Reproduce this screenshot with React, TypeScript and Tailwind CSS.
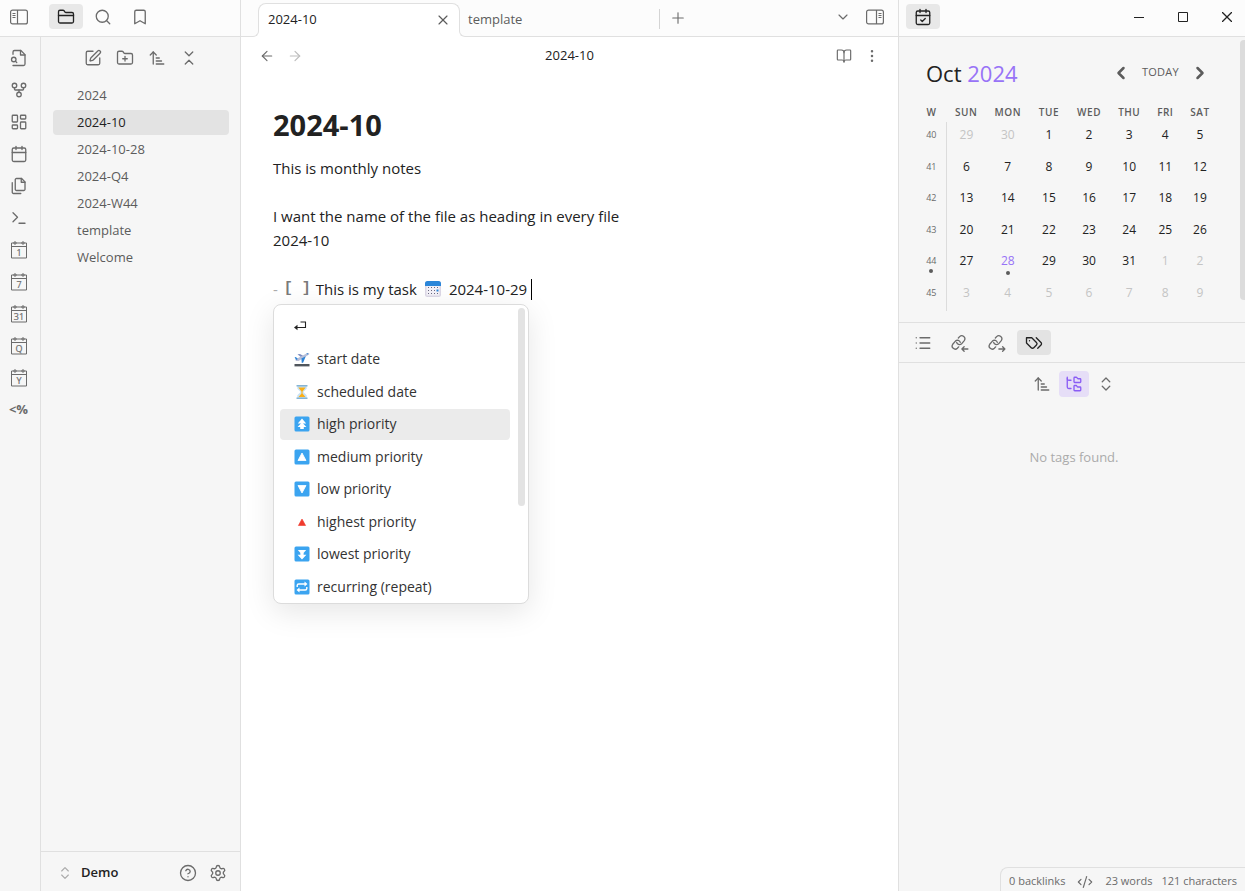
import type { ReactNode } from 'react';
import {
  ArrowLeft,
  ArrowRight,
  ArrowUpNarrowWide,
  Bookmark,
  BookOpen,
  Calendar,
  CalendarCheck,
  ChevronDown,
  ChevronLeft,
  ChevronRight,
  ChevronsDownUp,
  ChevronsUpDown,
  CircleHelp,
  CodeXml,
  EllipsisVertical,
  FolderClosed,
  FolderPlus,
  FolderTree,
  GitFork,
  LayoutDashboard,
  List,
  Plus,
  Search,
  Settings,
  SquarePen,
  Terminal,
  X,
} from 'lucide-react';

function LineIcon({ size = 18, children }: { size?: number; children: ReactNode }) {
  return (
    <svg
      width={size}
      height={size}
      viewBox="0 0 24 24"
      fill="none"
      stroke="currentColor"
      strokeWidth="1.75"
      strokeLinecap="round"
      strokeLinejoin="round"
      aria-hidden="true"
    >
      {children}
    </svg>
  );
}

function SidebarIcon({ side }: { side: 'left' | 'right' }) {
  const divider = side === 'left' ? 7.5 : 10.5;
  const lines = side === 'left' ? 2.5 : 12.5;
  return (
    <svg width="18" height="16" viewBox="0 0 18 16" fill="none" stroke="currentColor" aria-hidden="true">
      <rect x="0.6" y="1.1" width="16.8" height="13.8" rx="2" strokeWidth="1.2" />
      <path d={`M${divider} 1v14`} strokeWidth="1.2" />
      <path d={`M${lines} 4.5h3M${lines} 6.5h3M${lines} 8.5h3`} strokeWidth="1" />
    </svg>
  );
}

function FileSearchIcon() {
  return (
    <LineIcon>
      <path d="M4 22h14a2 2 0 0 0 2-2V7.5L14.5 2H6a2 2 0 0 0-2 2v3" />
      <path d="M14 2v6h6" />
      <path d="M5 17a3 3 0 1 0 0-6 3 3 0 0 0 0 6z" />
      <path d="m9 18-1.5-1.5" />
    </LineIcon>
  );
}

function FilesIcon() {
  return (
    <LineIcon>
      <path d="M15.5 2H8.6c-.4 0-.8.2-1.1.5-.3.3-.5.7-.5 1.1v12.8c0 .4.2.8.5 1.1.3.3.7.5 1.1.5h9.8c.4 0 .8-.2 1.1-.5.3-.3.5-.7.5-1.1V6.5L15.5 2z" />
      <path d="M3 7.6v12.8c0 .4.2.8.5 1.1.3.3.7.5 1.1.5h9.8" />
      <path d="M15 2v5h5" />
    </LineIcon>
  );
}

function TagsIcon() {
  return (
    <LineIcon>
      <path d="M9 5H2v7l6.29 6.29c.94.94 2.48.94 3.42 0l3.58-3.58c.94-.94.94-2.48 0-3.42L9 5Z" />
      <path d="M6 9.01V9" />
      <path d="m15 5 6.3 6.3a2.4 2.4 0 0 1 0 3.4L17 19" />
    </LineIcon>
  );
}

function LinksIcon({ outgoing }: { outgoing?: boolean }) {
  return (
    <LineIcon>
      <path d="M7.600 11.300a4 4 0 0 0 6.200 2.100l3.900-4.600a4.100 4.100 0 0 0-6.200-5.300L9.800 5.400" />
      <path d="M12.400 9.700a4 4 0 0 0-6.200-2.100l-3.900 4.600a4.100 4.100 0 0 0 6.200 5.300l1.700-1.900" transform="translate(0 1.500)" />
      {outgoing ? <path d="M14.500 20h8M19.500 17l3 3-3 3" /> : <path d="M14.500 20h8M17.500 17l-3 3 3 3" />}
    </LineIcon>
  );
}

function DatedCalendarIcon({ label }: { label: string }) {
  return (
    <svg width="18" height="20" viewBox="0 0 18 20" fill="none" stroke="currentColor" aria-hidden="true">
      <path d="M1.5 3h15v15h-15zM1.5 6.5h15" strokeWidth="1" />
      <circle cx="5" cy="3" r="1.2" strokeWidth="1" />
      <circle cx="13" cy="3" r="1.2" strokeWidth="1" />
      <text
        x="9"
        y="15.5"
        textAnchor="middle"
        fontSize="9"
        fill="currentColor"
        strokeWidth="0.2"
        fontFamily="Open Sans, sans-serif"
      >
        {label}
      </text>
    </svg>
  );
}

function IconButton({
  label,
  className,
  children,
}: {
  label: string;
  className: string;
  children: ReactNode;
}) {
  return (
    <button
      type="button"
      aria-label={label}
      className={`flex shrink-0 items-center justify-center rounded ${className}`}
    >
      {children}
    </button>
  );
}

const stroke = { size: 18, strokeWidth: 1.75 };

const ribbon: { label: string; icon: ReactNode }[] = [
  { label: 'Open quick switcher', icon: <FileSearchIcon /> },
  { label: 'Open graph view', icon: <GitFork {...stroke} /> },
  { label: 'Create new canvas', icon: <LayoutDashboard {...stroke} /> },
  { label: "Open today's daily note", icon: <Calendar {...stroke} /> },
  { label: 'Insert template', icon: <FilesIcon /> },
  { label: 'Open command palette', icon: <Terminal {...stroke} /> },
  { label: 'Open daily note', icon: <DatedCalendarIcon label="1" /> },
  { label: 'Open weekly note', icon: <DatedCalendarIcon label="7" /> },
  { label: 'Open monthly note', icon: <DatedCalendarIcon label="31" /> },
  { label: 'Open quarterly note', icon: <DatedCalendarIcon label="Q" /> },
  { label: 'Open yearly note', icon: <DatedCalendarIcon label="Y" /> },
  { label: 'Templater', icon: <span className="text-[13px] font-bold">&lt;%</span> },
];

const files = ['2024', '2024-10', '2024-10-28', '2024-Q4', '2024-W44', 'template', 'Welcome'];

function LeftPanel() {
  return (
    <aside className="flex w-[241px] shrink-0 flex-col border-r border-[#e0e0e0] bg-[#f6f6f6] text-[#5c5c5c]">
      <div className="flex h-[37px] shrink-0 items-center border-b border-[#e0e0e0] bg-[#fcfcfc] pb-[3px] text-[#6b6b6b]">
        <IconButton label="Collapse left sidebar" className="ml-0.5 mr-[13px] h-[25px] w-[34px]">
          <SidebarIcon side="left" />
        </IconButton>
        <div className="flex gap-[3px]">
          <IconButton label="Files" className="h-[25px] w-[34px] bg-[#e8e8e8] text-[#222222]">
            <FolderClosed {...stroke} />
          </IconButton>
          <IconButton label="Search" className="h-[25px] w-[34px]">
            <Search {...stroke} />
          </IconButton>
          <IconButton label="Bookmarks" className="h-[25px] w-[34px]">
            <Bookmark {...stroke} />
          </IconButton>
        </div>
      </div>
      <div className="flex min-h-0 flex-1">
        <nav
          aria-label="Ribbon"
          className="flex w-[41px] shrink-0 flex-col items-center gap-1 border-r border-[#e0e0e0] pt-[7px] pr-[3px] text-[#6b6b6b]"
        >
          {ribbon.map((r) => (
            <IconButton key={r.label} label={r.label} className="h-7 w-7">
              {r.icon}
            </IconButton>
          ))}
        </nav>
        <div className="flex min-w-0 flex-1 flex-col">
          <div className="flex justify-center gap-1 pt-[7px] text-[#6b6b6b]">
            <IconButton label="New note" className="size-7">
              <SquarePen {...stroke} />
            </IconButton>
            <IconButton label="New folder" className="size-7">
              <FolderPlus {...stroke} />
            </IconButton>
            <IconButton label="Change sort order" className="size-7">
              <ArrowUpNarrowWide {...stroke} />
            </IconButton>
            <IconButton label="Collapse all" className="size-7">
              <ChevronsDownUp {...stroke} />
            </IconButton>
          </div>
          <ul className="flex flex-1 flex-col gap-0.5 pt-[11px] pr-[11px] pl-3">
            {files.map((f) => (
              <li key={f}>
                <button
                  type="button"
                  className={`block h-[25px] w-full rounded pl-6 text-left text-[13px] leading-[25px] ${
                    f === '2024-10' ? 'bg-[#e3e3e3] text-[#222222]' : 'text-[#5c5c5c]'
                  }`}
                >
                  {f}
                </button>
              </li>
            ))}
          </ul>
          <div className="flex h-10 items-center border-t border-[#e0e0e0] pt-[3px] pr-2 pl-4">
            <button type="button" className="flex flex-1 items-center gap-2 text-[13px] font-semibold text-[#222222]">
              <ChevronsUpDown size={16} strokeWidth={1.75} className="text-[#ababab]" />
              Demo
            </button>
            <div className="flex gap-0.5 text-[#6b6b6b]">
              <IconButton label="Help" className="size-7">
                <CircleHelp {...stroke} />
              </IconButton>
              <IconButton label="Settings" className="size-7">
                <Settings {...stroke} />
              </IconButton>
            </div>
          </div>
        </div>
      </div>
    </aside>
  );
}

function TabBar() {
  return (
    <div className="flex h-[37px] shrink-0 border-b border-[#e0e0e0] bg-[#fcfcfc] text-[13px] text-[#5c5c5c]">
      <div className="relative mt-[3px] -mb-px ml-[17px] flex w-[202px] shrink-0 items-center rounded-t-lg border border-b-0 border-[#e0e0e0] bg-white pr-2 pb-0.5 pl-[9px] text-[#222222]">
        <button type="button" className="flex-1 text-left">
          2024-10
        </button>
        <IconButton label="Close tab" className="size-4 text-[#5c5c5c]">
          <X size={16} strokeWidth={1.75} />
        </IconButton>
        <span className="absolute bottom-0 -left-[7px] size-[7px] overflow-hidden bg-white">
          <span className="block size-full rounded-br-[6px] border-r border-b border-[#e0e0e0] bg-[#fcfcfc]" />
        </span>
        <span className="absolute -right-[7px] bottom-0 size-[7px] overflow-hidden bg-white">
          <span className="block size-full rounded-bl-[6px] border-b border-l border-[#e0e0e0] bg-[#fcfcfc]" />
        </span>
      </div>
      <button type="button" className="w-[192px] pt-[3px] pl-2 text-left">
        template
      </button>
      <span className="mt-[9px] ml-[7px] h-5 w-px bg-[#d4d4d4]" />
      <IconButton label="New tab" className="mt-1 ml-1 size-7 text-[#6b6b6b]">
        <Plus size={18} strokeWidth={1.5} />
      </IconButton>
      <div className="ml-auto flex items-center gap-1 pr-[9px] pb-0.5 text-[#6b6b6b]">
        <IconButton label="Tab list" className="size-7">
          <ChevronDown size={16} strokeWidth={1.75} />
        </IconButton>
        <IconButton label="Collapse right sidebar" className="size-7">
          <SidebarIcon side="right" />
        </IconButton>
      </div>
    </div>
  );
}

function BlueKey({ children }: { children: ReactNode }) {
  return (
    <svg width="16" height="16" viewBox="0 0 16 16" fill="none" aria-hidden="true">
      <rect x="0.5" y="0.5" width="15" height="15" rx="1.5" fill="#3ba4f0" />
      {children}
    </svg>
  );
}

const suggestions: { text: string; icon: ReactNode }[] = [
  {
    text: 'start date',
    icon: (
      <svg width="16" height="16" viewBox="0 0 16 16" aria-hidden="true">
        <rect x="0.5" y="13" width="15" height="2.4" fill="#50565c" />
        <path d="M3.5 3.2 6 3l4 2.2-2.6 1.3z" fill="#7d8fc4" />
        <path d="M1.2 8.6 13 2.2c1-.5 2-.3 2.2.2.2.6-.2 1.2-1 1.7L4.6 9.9 2 10z" fill="#b9bfd8" />
        <path d="m7.4 7.4 4.4-2.2-2.6 6.2-1.4.5z" fill="#2b83d6" />
        <path d="M.6 6.4l1.3-.3 2 1.9-1.6 1z" fill="#2b83d6" />
        <path d="m12.4 2.6 1.4-.4.6.8-1.3.5z" fill="#2b83d6" />
      </svg>
    ),
  },
  {
    text: 'scheduled date',
    icon: (
      <svg width="16" height="16" viewBox="0 0 16 16" aria-hidden="true">
        <path d="M3.3 2h9.4v2.8L9.4 8l3.3 3.2V14H3.3v-2.8L6.6 8 3.3 4.8z" fill="#c9e3f5" />
        <path d="M4.3 3.5h7.4L8.5 7.6v1.9l3 3.5h-7l3-3.5V7.6z" fill="#fbaf17" />
        <path d="M2.5 1h11v1.500h-11zM2.5 13.5h11V15h-11z" fill="#86b4d3" />
      </svg>
    ),
  },
  {
    text: 'high priority',
    icon: (
      <BlueKey>
        <path d="M8 2.6 12.2 7.400H3.800z" fill="#fff" />
        <path d="M8 6.200 12.400 11H9.800v2H6.200v-2H3.600z" fill="#fff" />
      </BlueKey>
    ),
  },
  {
    text: 'medium priority',
    icon: (
      <BlueKey>
        <path d="m8 4 4 7.500H4z" fill="#fff" stroke="#fff" strokeLinejoin="round" strokeWidth="0.800" />
      </BlueKey>
    ),
  },
  {
    text: 'low priority',
    icon: (
      <BlueKey>
        <path d="m8 12 4-7.500H4z" fill="#fff" stroke="#fff" strokeLinejoin="round" strokeWidth="0.800" />
      </BlueKey>
    ),
  },
  {
    text: 'highest priority',
    icon: (
      <svg width="16" height="16" viewBox="0 0 16 16" aria-hidden="true">
        <path d="m8 5 3.600 6.500H4.400z" fill="#f03a2e" stroke="#f03a2e" strokeLinejoin="round" strokeWidth="0.600" />
      </svg>
    ),
  },
  {
    text: 'lowest priority',
    icon: (
      <BlueKey>
        <path d="M8 8.800 12.200 4H3.800z" fill="#fff" />
        <path d="M8 13.400 12.400 8.800H9.600V7H6.400v1.800H3.600z" fill="#fff" />
      </BlueKey>
    ),
  },
  {
    text: 'recurring (repeat)',
    icon: (
      <BlueKey>
        <path
          d="M3.200 8V6.500c0-1 .6-1.500 1.500-1.500h6.500M12.800 8v1.500c0 1-.6 1.500-1.500 1.500H4.800"
          stroke="#fff"
          strokeWidth="1.400"
        />
        <path d="m10.500 2.600 3 2.400-3 2.400zM5.500 8.600l-3 2.400 3 2.400z" fill="#fff" />
      </BlueKey>
    ),
  },
];

function SuggestionPopup() {
  return (
    <div className="absolute top-[27px] left-0 flex w-64 overflow-hidden rounded-lg border border-[#dcdcdc] bg-white shadow-[0_8px_30px_rgba(0,0,0,0.1)]">
      <ul
        role="listbox"
        aria-label="Task suggestions"
        className="flex h-[298px] flex-1 flex-col justify-between pt-1 pb-px pl-1.5"
      >
        <li role="option" aria-selected="false" className="flex h-[33px] shrink-0 items-center pl-[13px]">
          <svg width="14" height="12" viewBox="0 0 14 12" fill="none" stroke="#222222" aria-label="New line">
            <path d="M7.5 2h5v5.500H2" strokeWidth="1.1" />
            <path d="M4.5 4.800v5.400L1 7.500z" fill="#222222" stroke="none" />
          </svg>
        </li>
        {suggestions.map((s) => (
          <li
            key={s.text}
            role="option"
            aria-selected={s.text === 'high priority'}
            className={`flex h-[31px] shrink-0 items-center gap-[7px] rounded pl-[14px] text-[14px] text-[#333333] ${
              s.text === 'high priority' ? 'bg-[#ebebeb]' : ''
            }`}
          >
            {s.icon}
            {s.text}
          </li>
        ))}
      </ul>
      <div className="w-[18px] pt-[3px] pr-[3px] pl-2">
        <div className="h-[198px] rounded-full bg-[#e3e3e3]" />
      </div>
    </div>
  );
}

function DateEmoji() {
  return (
    <svg width="18" height="18" viewBox="0 0 18 18" className="mx-[7px] shrink-0" aria-hidden="true">
      <rect x="1" y="1" width="16" height="16" rx="2.500" fill="#dcd8e6" />
      <path d="M1 6V3.500A2.500 2.500 0 0 1 3.500 1h11A2.500 2.500 0 0 1 17 3.500V6z" fill="#2b86d9" />
      <rect x="2.500" y="6" width="13" height="9.500" fill="#f3f1f8" />
      <g fill="#6d6a80">
        {[7, 10, 13].map((y) =>
          [4, 7, 10, 13].map((x) => <rect key={`${x}-${y}`} x={x} y={y} width="1" height="1" />),
        )}
      </g>
      <rect x="12.500" y="9.500" width="2" height="2" fill="#2b86d9" />
    </svg>
  );
}

function Editor() {
  return (
    <main className="flex min-w-0 flex-1 flex-col bg-white">
      <TabBar />
      <div className="flex h-[38px] shrink-0 items-center justify-between px-3 text-[#6b6b6b]">
        <div className="flex w-16">
          <IconButton label="Navigate back" className="size-7">
            <ArrowLeft size={16} strokeWidth={1.75} />
          </IconButton>
          <IconButton label="Navigate forward" className="size-7 text-[#bdbdbd]">
            <ArrowRight size={16} strokeWidth={1.75} />
          </IconButton>
        </div>
        <span className="text-[13px] text-[#222222]">2024-10</span>
        <div className="flex w-16 justify-end">
          <IconButton label="Reading view" className="size-7">
            <BookOpen size={16} strokeWidth={1.75} />
          </IconButton>
          <IconButton label="More options" className="size-7">
            <EllipsisVertical size={16} strokeWidth={1.75} />
          </IconButton>
        </div>
      </div>
      <article className="px-8 pt-8 text-[15px] leading-6 text-[#222222]">
        <h1 className="mb-[13px] text-[29px] leading-9 font-bold">2024-10</h1>
        <p>This is monthly notes</p>
        <p className="mt-6">I want the name of the file as heading in every file</p>
        <p>2024-10</p>
        <div className="relative mt-[25px] flex items-center whitespace-pre">
          <span className="mr-0.5 text-[#ababab]">- </span>
          <span className="mr-[5px] font-['Liberation_Mono',monospace] font-bold text-[#7a7a7a]">[ ]</span>
          <span>This is my task</span>
          <DateEmoji />
          <span>2024-10-29</span>
          <span className="ml-1 h-[21px] w-px bg-black" />
          <SuggestionPopup />
        </div>
      </article>
    </main>
  );
}

const weeks: { week: number; days: number[] }[] = [
  { week: 40, days: [29, 30, 1, 2, 3, 4, 5] },
  { week: 41, days: [6, 7, 8, 9, 10, 11, 12] },
  { week: 42, days: [13, 14, 15, 16, 17, 18, 19] },
  { week: 43, days: [20, 21, 22, 23, 24, 25, 26] },
  { week: 44, days: [27, 28, 29, 30, 31, 1, 2] },
  { week: 45, days: [3, 4, 5, 6, 7, 8, 9] },
];

function dayColor(week: number, day: number) {
  if (week === 44 && day === 28) return 'text-[#9873f7]';
  if ((week === 40 && day > 20) || (week >= 44 && day < 10)) return 'text-[#c4c4c4]';
  return 'text-[#222222]';
}

function MonthCalendar() {
  return (
    <section className="flex h-[286px] shrink-0 border-b border-[#e0e0e0]">
      <div className="flex-1 pt-5 pr-[22px] pl-[18px]">
        <div className="flex items-center justify-between pr-2 pl-[9px]">
          <h2 className="text-[22px] leading-8 font-medium text-[#222222]">
            Oct <span className="text-[#9873f7]">2024</span>
          </h2>
          <div className="flex items-center gap-[7px] text-[#5c5c5c]">
            <IconButton label="Previous month" className="size-5">
              <ChevronLeft size={20} strokeWidth={3} />
            </IconButton>
            <button type="button" className="px-1 pb-0.5 text-[11px] leading-5 tracking-wide">
              TODAY
            </button>
            <IconButton label="Next month" className="size-5">
              <ChevronRight size={20} strokeWidth={3} />
            </IconButton>
          </div>
        </div>
        <table className="mt-3 w-full table-fixed border-collapse text-center">
          <colgroup>
            <col className="w-[29px]" />
            <col className="w-10" />
            <col className="w-[43px]" />
            <col className="w-[39px]" />
            <col className="w-[41px]" />
            <col className="w-[39px]" />
            <col className="w-[33px]" />
            <col className="w-9" />
          </colgroup>
          <thead>
            <tr className="h-[21px] text-[10px] leading-5 tracking-wider text-[#5c5c5c]">
              {['W', 'SUN', 'MON', 'TUE', 'WED', 'THU', 'FRI', 'SAT'].map((d) => (
                <th key={d} scope="col" className="p-0 font-semibold">
                  {d}
                </th>
              ))}
            </tr>
          </thead>
          <tbody>
            {weeks.map(({ week, days }) => (
              <tr key={week} className="align-top odd:h-8 even:h-[31px]">
                <th scope="row" className="border-r border-[#dcdcdc] p-0 pt-[3px] font-normal text-[#6b6b6b]">
                  <span className="block text-[9px] leading-5">{week}</span>
                  {week === 44 && <span className="mx-auto -mt-0.5 block size-1 rounded-full bg-[#5c5c5c]" />}
                </th>
                {days.map((day) => (
                  <td key={day} className={`p-0 pt-[3px] ${dayColor(week, day)}`}>
                    <button type="button" className="block w-full text-[12px] leading-5">
                      {day}
                    </button>
                    {week === 44 && day === 28 && (
                      <span className="mx-auto block size-1 rounded-full bg-[#5c5c5c]" />
                    )}
                  </td>
                ))}
              </tr>
            ))}
          </tbody>
        </table>
      </div>
      <div className="mt-[3px] h-[260px] w-[5px] rounded-l bg-[#dcdcdc]" />
    </section>
  );
}

function RightPanel() {
  return (
    <aside className="relative flex w-[347px] shrink-0 flex-col border-l border-[#e0e0e0] bg-[#f6f6f6] text-[#6b6b6b]">
      <div className="flex h-[37px] shrink-0 items-center justify-between border-b border-[#e0e0e0] bg-[#fcfcfc] pb-[3px] pl-[7px] text-[#222222]">
        <IconButton label="Calendar" className="h-[25px] w-[34px] bg-[#e8e8e8]">
          <CalendarCheck {...stroke} />
        </IconButton>
        <div className="flex">
          <IconButton label="Minimize" className="h-7 w-11">
            <svg width="10" height="10" viewBox="0 0 10 10" aria-hidden="true">
              <path d="M0 5.5h10" stroke="currentColor" />
            </svg>
          </IconButton>
          <IconButton label="Maximize" className="h-7 w-11">
            <svg width="10" height="10" viewBox="0 0 10 10" fill="none" aria-hidden="true">
              <path d="M.5.5h9v9h-9z" stroke="currentColor" />
            </svg>
          </IconButton>
          <IconButton label="Close" className="h-7 w-10 pl-1">
            <svg width="10" height="10" viewBox="0 0 10 10" aria-hidden="true">
              <path d="m0 0 10 10M10 0 0 10" stroke="currentColor" strokeWidth="1.3" />
            </svg>
          </IconButton>
        </div>
      </div>
      <MonthCalendar />
      <div className="flex h-10 shrink-0 items-center gap-[3px] border-b border-[#e0e0e0] pl-[7px]">
        <IconButton label="Outline" className="h-[25px] w-[34px]">
          <List {...stroke} />
        </IconButton>
        <IconButton label="Backlinks" className="h-[25px] w-[34px]">
          <LinksIcon />
        </IconButton>
        <IconButton label="Outgoing links" className="h-[25px] w-[34px]">
          <LinksIcon outgoing />
        </IconButton>
        <IconButton label="Tags" className="h-[25px] w-[34px] bg-[#e3e3e3] text-[#222222]">
          <TagsIcon />
        </IconButton>
      </div>
      <div className="pt-2 pl-1">
        <div className="flex justify-center gap-0.5">
          <IconButton label="Change sort order" className="h-[26px] w-[30px]">
            <ArrowUpNarrowWide {...stroke} />
          </IconButton>
          <IconButton label="Show nested tags" className="h-[26px] w-[30px] bg-[#e6def7] text-[#8a5cf5]">
            <FolderTree {...stroke} />
          </IconButton>
          <IconButton label="Expand all" className="h-[26px] w-[30px]">
            <ChevronsUpDown {...stroke} />
          </IconButton>
        </div>
        <p className="mt-[50px] text-center text-[13px] leading-5 text-[#ababab]">No tags found.</p>
      </div>
      <footer className="absolute right-0 bottom-0 flex h-6 items-center rounded-tl-lg border-t border-l border-[#e0e0e0] pt-1 pr-2 pl-2 text-[11px] whitespace-nowrap">
        <span>0 backlinks</span>
        <CodeXml size={16} strokeWidth={1.75} className="mx-3" />
        <span>23 words</span>
        <span className="ml-[9px]">121 characters</span>
      </footer>
    </aside>
  );
}

export default function App() {
  return (
    <div className="flex min-h-screen w-full overflow-hidden font-['Open_Sans','Noto_Sans',sans-serif]">
      <LeftPanel />
      <Editor />
      <RightPanel />
    </div>
  );
}
